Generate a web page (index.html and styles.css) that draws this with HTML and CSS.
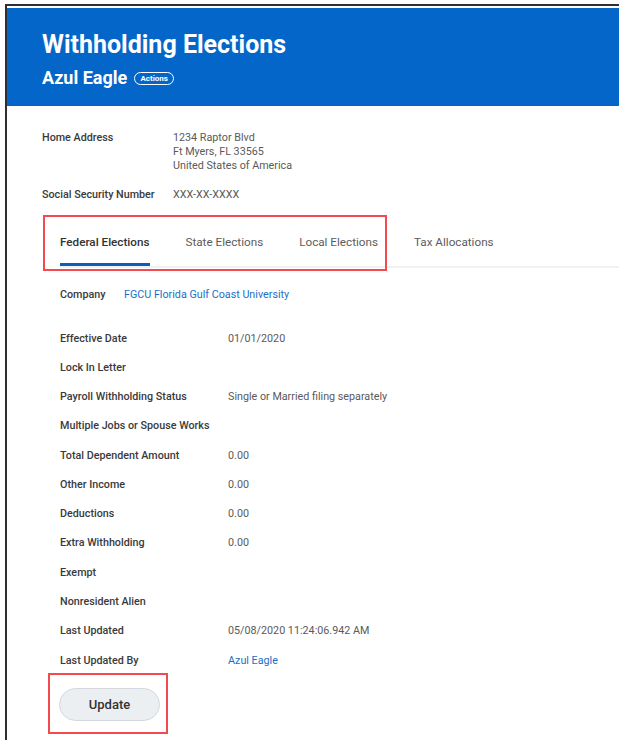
FILE: index.html
```html
<!DOCTYPE html>
<html lang="en">
<head>
<meta charset="utf-8">
<title>Withholding Elections</title>
<link rel="stylesheet" href="styles.css">
</head>
<body>
<div class="frame">
  <header class="hero">
    <h1 class="hero-title">Withholding Elections</h1>
    <div class="hero-sub">
      <span class="hero-name">Azul Eagle</span>
      <span class="pill">Actions</span>
    </div>
  </header>

  <main class="content">
    <dl class="info">
      <dt>Home Address</dt>
      <dd>1234 Raptor Blvd<br>Ft Myers, FL 33565<br>United States of America</dd>
      <dt>Social Security Number</dt>
      <dd>XXX-XX-XXXX</dd>
    </dl>

    <section class="tabs-wrap">
      <nav class="tabs">
        <span class="tab active">Federal Elections</span>
        <span class="tab">State Elections</span>
        <span class="tab">Local Elections</span>
        <span class="tab">Tax Allocations</span>
      </nav>
      <span class="mark mark-tabs"></span>
    </section>

    <div class="company">
      <span class="label">Company</span>
      <a class="link" href="#">FGCU Florida Gulf Coast University</a>
    </div>

    <dl class="details">
      <dt>Effective Date</dt><dd>01/01/2020</dd>
      <dt>Lock In Letter</dt><dd></dd>
      <dt>Payroll Withholding Status</dt><dd>Single or Married filing separately</dd>
      <dt>Multiple Jobs or Spouse Works</dt><dd></dd>
      <dt>Total Dependent Amount</dt><dd>0.00</dd>
      <dt>Other Income</dt><dd>0.00</dd>
      <dt>Deductions</dt><dd>0.00</dd>
      <dt>Extra Withholding</dt><dd>0.00</dd>
      <dt>Exempt</dt><dd></dd>
      <dt>Nonresident Alien</dt><dd></dd>
      <dt>Last Updated</dt><dd>05/08/2020 11:24:06.942 AM</dd>
      <dt>Last Updated By</dt><dd><a class="link" href="#">Azul Eagle</a></dd>
    </dl>

    <div class="actions">
      <button class="btn" type="button">Update</button>
      <span class="mark mark-btn"></span>
    </div>
  </main>
</div>
</body>
</html>
```

FILE: styles.css
```css
* { box-sizing: border-box; }

html, body {
  margin: 0;
  background: #fff;
}

body {
  font-family: Roboto, "Liberation Sans", Arial, sans-serif;
  color: #333;
  overflow: hidden;
}

/* outer window edge: dark rule on top and left */
.frame {
  margin: 4px 0 0 5px;
  border-top: 2px solid #2f2f2f;
  border-left: 2px solid #2f2f2f;
  padding-top: 2px;
  height: 736px;
}

/* blue page header */
.hero {
  background: #0566c9;
  height: 98px;
  padding: 23px 0 0 35px;
  color: #fff;
}

.hero-title {
  margin: 0;
  font-size: 25px;
  line-height: 28px;
  font-weight: 700;
}

.hero-sub {
  display: flex;
  align-items: center;
  gap: 7px;
  margin-top: 9px;
  height: 20px;
}

.hero-name {
  font-size: 18px;
  line-height: 20px;
  font-weight: 700;
}

.pill {
  display: inline-flex;
  align-items: center;
  justify-content: center;
  width: 40px;
  height: 13px;
  border: 1px solid #fff;
  border-radius: 7px;
  font-size: 8px;
  font-weight: 700;
  margin-top: 1px;
}

.content {
  padding: 25px 0 0 35px;
}

/* worker info block */
.info {
  display: grid;
  grid-template-columns: 131px 1fr;
  row-gap: 15px;
  margin: 0;
  font-size: 10.75px;
  line-height: 14px;
}

.info dt,
.details dt,
.label {
  font-weight: 500;
  color: #3a3a3a;
}

.info dd,
.details dd {
  margin: 0;
  color: #5a5a5a;
}

/* tab strip */
.tabs-wrap {
  position: relative;
  margin-top: 13px;
  margin-left: 18px;
}

.tabs {
  display: flex;
  gap: 36px;
  padding-top: 19px;
  border-bottom: 2px solid #f0f1f2;
}

.tab {
  font-size: 11.7px;
  line-height: 16px;
  color: #5c5c5c;
  padding-bottom: 13px;
  border-bottom: 3px solid transparent;
}

.tab.active {
  color: #333;
  font-weight: 500;
  border-bottom-color: #0b5db8;
}

/* red highlight rectangles */
.mark {
  position: absolute;
  border: 2px solid #f24a4e;
  pointer-events: none;
}

.mark-tabs {
  left: -17px;
  top: 0;
  width: 344px;
  height: 56px;
}

/* company line */
.company {
  display: flex;
  margin: 20px 0 0 18px;
  font-size: 10.75px;
  line-height: 14px;
}

.company .label {
  width: 64px;
}

.link {
  color: #1d6fc6;
  text-decoration: none;
}

/* election detail rows */
.details {
  display: grid;
  grid-template-columns: 168px 1fr;
  grid-auto-rows: 29.27px;
  align-items: center;
  margin: 22px 0 0 18px;
  font-size: 10.75px;
  line-height: 14px;
}

/* update button */
.actions {
  position: relative;
  margin: 13px 0 0 17px;
  width: 101px;
}

.btn {
  display: block;
  width: 101px;
  height: 33px;
  border: 1px solid #d4d8dc;
  border-radius: 17px;
  background: #eceff1;
  font-family: inherit;
  font-size: 13px;
  font-weight: 500;
  color: #333;
  padding: 0;
}

.mark-btn {
  left: -11px;
  top: -15px;
  width: 120px;
  height: 61px;
}
```
